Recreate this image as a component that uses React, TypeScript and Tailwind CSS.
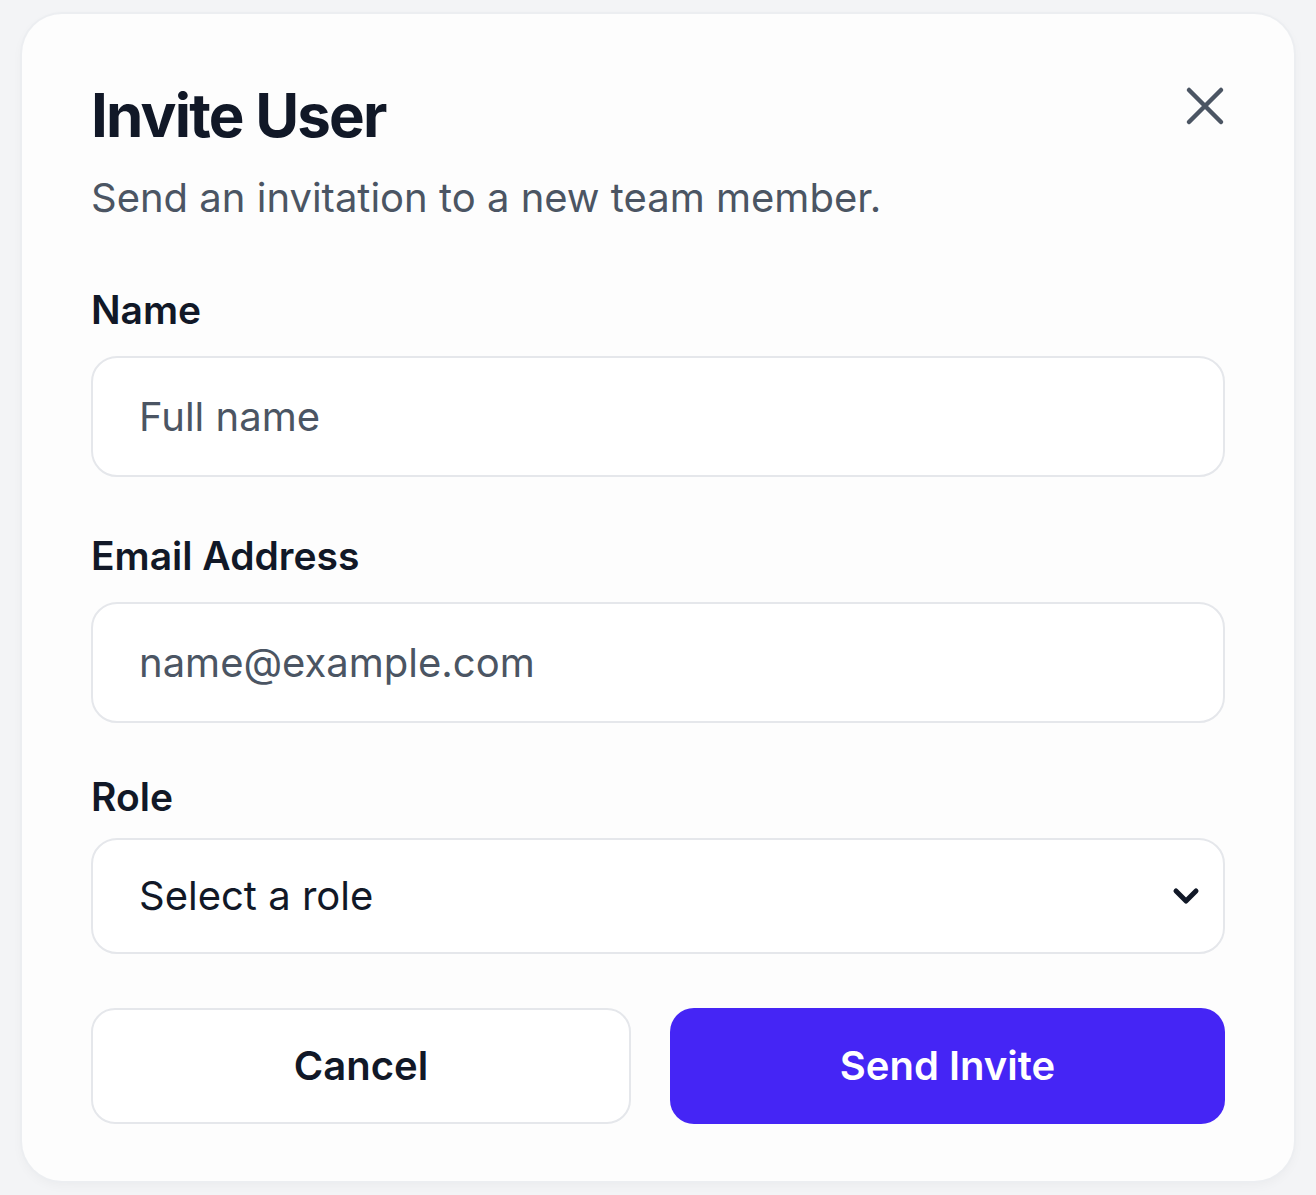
import { ChevronDown } from 'lucide-react'

// Invite dialog, shown at 2x scale
function Label({ children }: { children: string }) {
  return <label className="text-[39px] font-semibold leading-[48px] text-[#111827]">{children}</label>
}

function Field({ label, placeholder, className }: { label: string; placeholder: string; className?: string }) {
  return (
    <div className={`flex flex-col ${className ?? ''}`}>
      <Label>{label}</Label>
      <input
        placeholder={placeholder}
        className="mt-[22px] h-[121px] w-full rounded-[26px] border-2 border-[#e5e7eb] bg-white px-[46px] text-[40px] text-[#111827] outline-none placeholder:text-[#4b5563]"
      />
    </div>
  )
}

export default function App() {
  return (
    <div className="min-h-screen bg-[#f3f4f6] px-[22px] py-[14px] font-['Inter',sans-serif]">
      <div className="rounded-[40px] bg-[#fdfdfd] px-[69px] pb-[57px] pt-[63px] shadow-[0_0_0_2px_#eceef1,0_4px_12px_rgba(0,0,0,0.04)]">
        <div className="flex items-start justify-between">
          <div>
            <h2 className="text-[60px] font-bold leading-[76px] tracking-[-1.8px] text-[#111827]">Invite User</h2>
            <p className="mt-[17px] text-[40px] leading-[56px] text-[#4b5563]">
              Send an invitation to a new team member.
            </p>
          </div>
          <button className="mt-[9px] text-[#4b5563]">
            <svg width="40" height="40" viewBox="0 0 40 40" fill="none" stroke="currentColor" strokeWidth="4.5" strokeLinecap="round">
              <path d="M4 4 L36 36 M36 4 L4 36" />
            </svg>
          </button>
        </div>

        <div className="mt-[60px] flex flex-col">
          <Field label="Name" placeholder="Full name" />
          <Field label="Email Address" placeholder="name@example.com" className="mt-[55px]" />
          <div className="mt-[50px] flex flex-col">
            <Label>Role</Label>
            <div className="mt-[17px] flex h-[116px] w-full items-center justify-between rounded-[26px] border-2 border-[#e5e7eb] bg-white pl-[46px] pr-[17px]">
              <span className="text-[40px] text-[#111827]">Select a role</span>
              <ChevronDown className="h-[40px] w-[40px] text-[#111827]" strokeWidth={3} />
            </div>
          </div>
        </div>

        <div className="mt-[54px] grid grid-cols-[540px_1fr] gap-[39px]">
          <button className="h-[116px] rounded-[24px] border-2 border-[#e5e7eb] bg-white text-[40px] font-semibold text-[#111827]">
            Cancel
          </button>
          <button className="h-[116px] rounded-[24px] bg-[#4525f5] text-[40px] font-semibold text-white">
            Send Invite
          </button>
        </div>
      </div>
    </div>
  )
}
